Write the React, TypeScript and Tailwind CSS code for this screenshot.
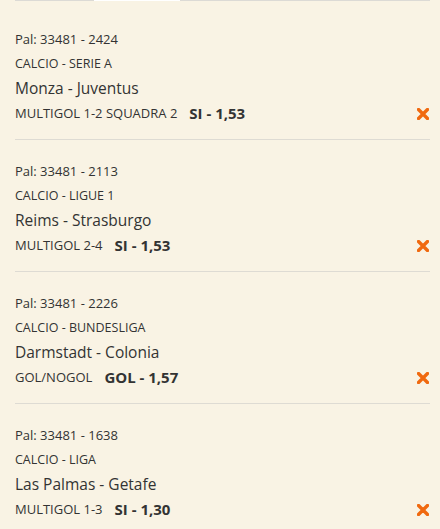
import { FC } from "react";

type Bet = {
  pal: string;
  league: string;
  match: string;
  market: string;
  pick: string;
};

const bets: Bet[] = [
  { pal: "Pal: 33481 - 2424", league: "CALCIO - SERIE A", match: "Monza - Juventus", market: "MULTIGOL 1-2 SQUADRA 2", pick: "SI - 1,53" },
  { pal: "Pal: 33481 - 2113", league: "CALCIO - LIGUE 1", match: "Reims - Strasburgo", market: "MULTIGOL 2-4", pick: "SI - 1,53" },
  { pal: "Pal: 33481 - 2226", league: "CALCIO - BUNDESLIGA", match: "Darmstadt - Colonia", market: "GOL/NOGOL", pick: "GOL - 1,57" },
  { pal: "Pal: 33481 - 1638", league: "CALCIO - LIGA", match: "Las Palmas - Getafe", market: "MULTIGOL 1-3", pick: "SI - 1,30" },
];

const RemoveIcon: FC = () => (
  <svg width="12" height="12" viewBox="0 0 12 12" className="text-[#f0690f]">
    <path d="M1.5 1.5 L10.5 10.5 M10.5 1.5 L1.5 10.5" stroke="currentColor" strokeWidth="3.4" strokeLinecap="round" />
  </svg>
);

const BetRow: FC<{ bet: Bet; first: boolean }> = ({ bet, first }) => (
  <div className={`border-b border-[#dedbd3] pb-[13px] ${first ? "pt-[26px]" : "pt-[19px]"}`}>
    <div className="h-[25px] leading-[25px] text-[13px]">{bet.pal}</div>
    <div className="h-[24px] leading-[24px] text-[12.5px]">{bet.league}</div>
    <div className="h-[25px] leading-[25px] text-[15.5px]">{bet.match}</div>
    <div className="h-[25px] flex items-center">
      <span className="text-[13px]">{bet.market}</span>
      <span className="ml-[12px] text-[15px] font-bold">{bet.pick}</span>
      <button className="ml-auto mr-[1px] flex items-center">
        <RemoveIcon />
      </button>
    </div>
  </div>
);

export default function App() {
  return (
    <div
      className="min-h-[529px] w-[440px] bg-[#f9f3e4] text-[#333333]"
      style={{ fontFamily: '"Open Sans", "Noto Sans", sans-serif' }}
    >
      <div className="flex pl-[15px] pr-[10px]">
        <div className="h-px w-[79px] bg-[#dcdad5]" />
        <div className="h-px w-[86px] bg-white" />
        <div className="h-px flex-1 bg-[#dcdad5]" />
      </div>
      <div className="pl-[15px] pr-[10px]">
        {bets.map((bet, i) => (
          <BetRow key={bet.pal} bet={bet} first={i === 0} />
        ))}
      </div>
    </div>
  );
}
